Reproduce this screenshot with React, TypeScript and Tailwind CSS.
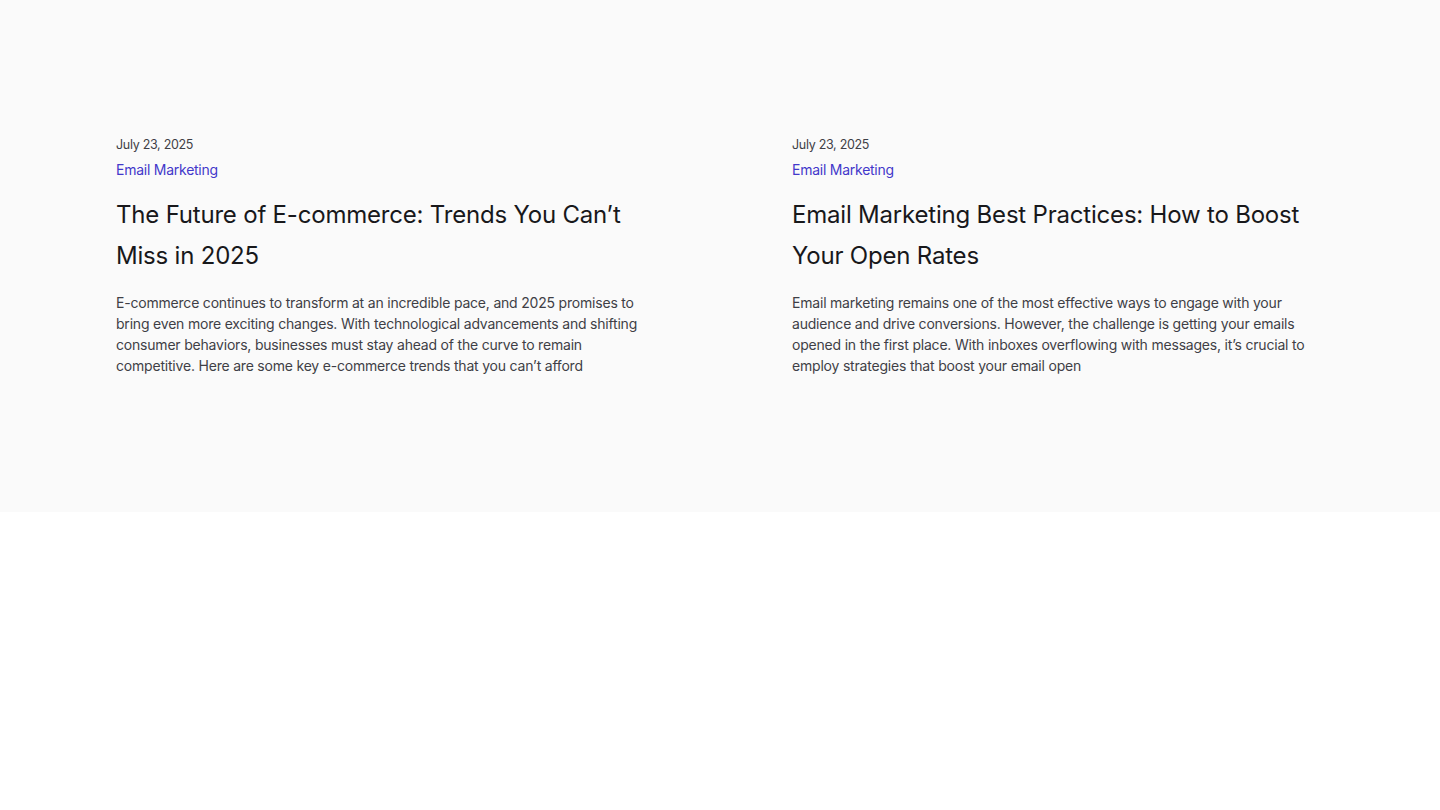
const posts = [
  {
    date: "July 23, 2025",
    category: "Email Marketing",
    title: "The Future of E-commerce: Trends You Can’t Miss in 2025",
    excerpt:
      "E-commerce continues to transform at an incredible pace, and 2025 promises to bring even more exciting changes. With technological advancements and shifting consumer behaviors, businesses must stay ahead of the curve to remain competitive. Here are some key e-commerce trends that you can’t afford",
  },
  {
    date: "July 23, 2025",
    category: "Email Marketing",
    title: "Email Marketing Best Practices: How to Boost Your Open Rates",
    excerpt:
      "Email marketing remains one of the most effective ways to engage with your audience and drive conversions. However, the challenge is getting your emails opened in the first place. With inboxes overflowing with messages, it’s crucial to employ strategies that boost your email open",
  },
];

export default function App() {
  return (
    <div className="min-h-[810px] bg-white font-['Inter',sans-serif]">
      <section className="h-[512px] bg-[#fafafa] px-[116px] pt-[137px]">
        <div className="grid grid-cols-2 gap-x-[144px]">
          {posts.map((post) => (
            <article key={post.title}>
              <p className="text-[12.5px] leading-[16px] tracking-[-0.3px] text-[#3f3f46]">{post.date}</p>
              <a
                href="#"
                className="mt-[8px] block text-[14px] leading-[18px] tracking-[-0.25px] text-[#4338ca]"
              >
                {post.category}
              </a>
              <h2 className="mt-[15px] text-[24px] leading-[41px] tracking-[-0.2px] text-[#18181b]">
                {post.title}
              </h2>
              <p className="mt-[16px] text-[14px] leading-[21px] tracking-[-0.2px] text-[#3f3f46]">
                {post.excerpt}
              </p>
            </article>
          ))}
        </div>
      </section>
    </div>
  );
}
